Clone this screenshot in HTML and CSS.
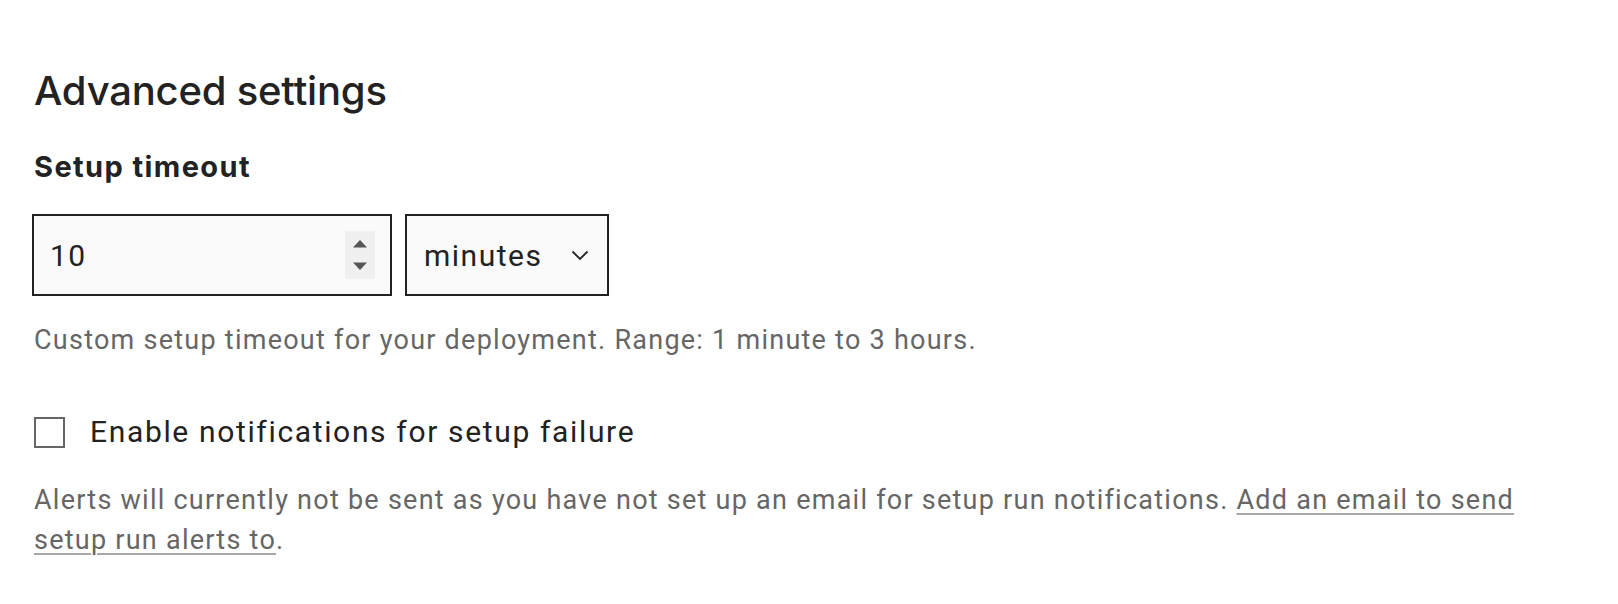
FILE: index.html
```html
<!DOCTYPE html>
<html lang="en">

<head>
    <meta charset="UTF-8">
    <meta name="viewport" content="width=device-width, initial-scale=1.0">
    <title>Advanced settings</title>
    <link rel="stylesheet" href="styles.css">
</head>

<body>
    <div class="page">
        <h2 class="title">Advanced settings</h2>

        <div class="field">
            <label class="label" for="timeout">Setup timeout</label>
            <div class="controls">
                <div class="number">
                    <span class="value">10</span>
                    <span class="spinner">
                        <svg width="30" height="48" viewBox="0 0 30 48">
                            <path d="M8 16.5 L15 9 L22 16.5 Z" fill="#555"/>
                            <path d="M8 31.5 L15 39 L22 31.5 Z" fill="#555"/>
                        </svg>
                    </span>
                </div>
                <div class="select">
                    <span>minutes</span>
                    <svg width="18" height="11" viewBox="0 0 18 11">
                        <path d="M1.5 1.5 L9 9 L16.5 1.5" fill="none" stroke="#222" stroke-width="1.8"/>
                    </svg>
                </div>
            </div>
            <p class="help">Custom setup timeout for your deployment. Range: 1 minute to 3 hours.</p>
        </div>

        <div class="check">
            <span class="box"></span>
            <span class="check-label">Enable notifications for setup failure</span>
        </div>
        <p class="help alerts">Alerts will currently not be sent as you have not set up an email for setup run notifications. <a href="#">Add an email to send setup run alerts to</a>.</p>
    </div>
</body>

</html>
```

FILE: styles.css
```css
body {
    margin: 0;
    background-color: #ffffff;
    color: #222222;
    font-family: Roboto, "Liberation Sans", sans-serif;
}

.page {
    padding: 65px 32px 0 34px;
    width: 1530px;
}

.title {
    margin: 0;
    font-family: Inter, "Liberation Sans", sans-serif;
    font-size: 40px;
    font-weight: 500;
    letter-spacing: -0.2px;
    line-height: 52px;
}

.field {
    margin-top: 32px;
}

.label {
    display: block;
    font-family: Inter, "Liberation Sans", sans-serif;
    font-size: 29px;
    font-weight: 700;
    letter-spacing: 1.4px;
    line-height: 36px;
}

.controls {
    display: flex;
    gap: 13px;
    margin-top: 29px;
    margin-left: -2px;
}

.number,
.select {
    display: flex;
    align-items: center;
    justify-content: space-between;
    height: 82px;
    box-sizing: border-box;
    border: 2px solid #222222;
    background-color: #fafafa;
    font-size: 30px;
    letter-spacing: 1.5px;
}

.number {
    width: 360px;
    padding: 0 15px 0 16px;
}

.spinner {
    display: flex;
    width: 30px;
    height: 48px;
    background-color: #f0f0f0;
}

.select {
    width: 204px;
    padding: 0 18px 0 17px;
}

.help {
    margin: 24px 0 0 0;
    color: #666666;
    font-size: 27px;
    line-height: 40px;
    letter-spacing: 1.25px;
}

.check {
    display: flex;
    align-items: center;
    gap: 25px;
    height: 40px;
    margin-top: 52px;
}

.box {
    width: 31px;
    height: 31px;
    box-sizing: border-box;
    border: 2px solid #666666;
}

.check-label {
    font-size: 30px;
    letter-spacing: 1.65px;
    line-height: 40px;
}

.alerts {
    margin-top: 28px;
}

.alerts a {
    color: #666666;
    text-decoration: underline;
    text-decoration-color: #a8a8a8;
    text-decoration-thickness: 2px;
    text-underline-offset: 4px;
}
```
